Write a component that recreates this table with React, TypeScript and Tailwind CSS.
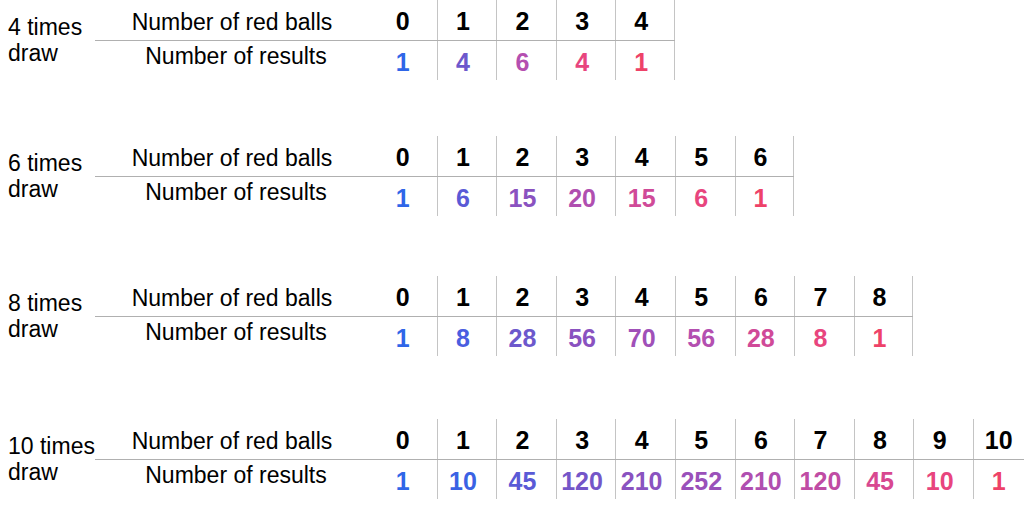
const blocks = [
    {
        label: '4 times',
        gap: 'mt-0',
        values: [1, 4, 6, 4, 1],
        colors: ['text-[#2f66e8]', 'text-[#6d58cc]', 'text-[#b44fb0]', 'text-[#e8457e]', 'text-[#ee4268]'],
    },
    {
        label: '6 times',
        gap: 'mt-[56px]',
        values: [1, 6, 15, 20, 15, 6, 1],
        colors: ['text-[#2f66e8]', 'text-[#5a5ad6]', 'text-[#8a52c0]', 'text-[#b04fb0]', 'text-[#d04a98]', 'text-[#e8457e]', 'text-[#ee4268]'],
    },
    {
        label: '8 times',
        gap: 'mt-[60px]',
        values: [1, 8, 28, 56, 70, 56, 28, 8, 1],
        colors: ['text-[#2f66e8]', 'text-[#4a5ee0]', 'text-[#6d58cc]', 'text-[#8a52c0]', 'text-[#a050b8]', 'text-[#b44fb0]', 'text-[#d04a98]', 'text-[#e8457e]', 'text-[#ee4268]'],
    },
    {
        label: '10 times',
        gap: 'mt-[63px]',
        values: [1, 10, 45, 120, 210, 252, 210, 120, 45, 10, 1],
        colors: ['text-[#2f66e8]', 'text-[#3a62e4]', 'text-[#5a5ad6]', 'text-[#7456c8]', 'text-[#8a52c0]', 'text-[#9a50ba]', 'text-[#b04fb0]', 'text-[#c04ca4]', 'text-[#d84890]', 'text-[#e8457e]', 'text-[#ee4268]'],
    },
];

function Cell({ index, last, className, children }: { index: number; last: boolean; className: string; children: React.ReactNode }) {
    return (
        <div
            className={
                'w-[59.6px] shrink-0 flex items-center justify-center pr-2 text-[25px] font-bold border-[#c4c4c4] ' +
                (index > 0 ? 'border-l ' : '') +
                (last ? 'border-r ' : '') +
                className
            }
        >
            {children}
        </div>
    );
}

export default function App() {
    return (
        <div className="w-[1024px] h-[512px] overflow-hidden bg-white text-black font-['Liberation_Sans',Arial,sans-serif]">
            {blocks.map((block) => (
                <div key={block.label} className={'flex ' + block.gap}>
                    {/* Draw count label */}
                    <div className="w-[95px] shrink-0 pl-2 pt-[14px] text-[23px] leading-[26px]">
                        <div className="whitespace-nowrap">{block.label}</div>
                        <div>draw</div>
                    </div>

                    <div className="flex flex-col">
                        <div className="flex h-10 pt-1">
                            <div className="w-[282px] shrink-0 flex items-center justify-center text-[23px] pr-2">Number of red balls</div>
                            {block.values.map((_, i) => (
                                <Cell key={i} index={i} last={i === block.values.length - 1} className="text-black -mt-1 pt-1">
                                    {i}
                                </Cell>
                            ))}
                        </div>
                        <div className="flex h-10 border-t border-[#b0b0b0]">
                            <div className="w-[282px] shrink-0 flex items-center justify-center text-[23px] pb-2">Number of results</div>
                            {block.values.map((v, i) => (
                                <Cell key={i} index={i} last={i === block.values.length - 1} className={block.colors[i] + ' pt-1'}>
                                    {v}
                                </Cell>
                            ))}
                        </div>
                    </div>
                </div>
            ))}
        </div>
    );
}
